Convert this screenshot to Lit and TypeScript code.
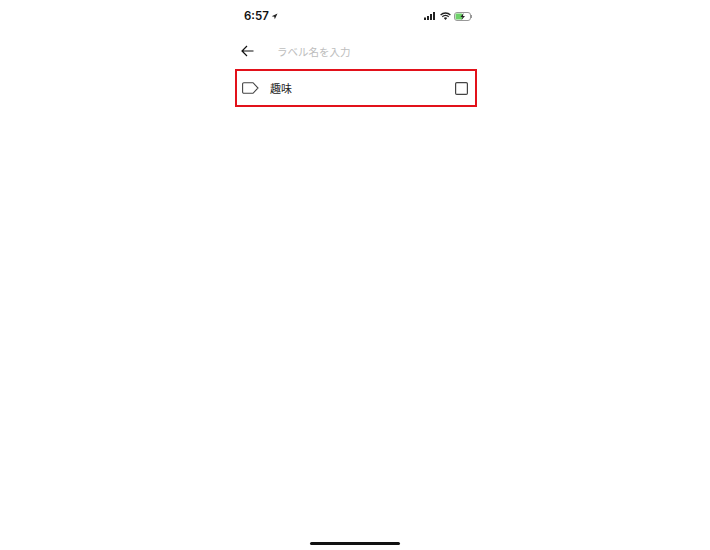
import { LitElement, html, css } from "lit";
import { customElement } from "lit/decorators.js";

@customElement("app-root")
export class AppRoot extends LitElement {
  static styles = css`
    :host { display: block; width: 710px; height: 550px; background: #fff; font-family: "Liberation Sans", "Noto Sans CJK JP", sans-serif; overflow: hidden; }
    .page { width: 242px; height: 550px; margin-left: 235px; display: flex; flex-direction: column; box-sizing: border-box; }
    .status { height: 32px; flex: none; display: flex; align-items: center; justify-content: space-between; padding: 0 4px 1px 9px; }
    .time { display: flex; align-items: center; gap: 2px; font: 600 11.5px "Inter", "Liberation Sans", sans-serif; color: #111; }
    .indicators { display: flex; align-items: center; gap: 3px; }
    .search { height: 36px; flex: none; display: flex; align-items: center; padding-left: 6px; margin-bottom: 0; }
    .placeholder { margin-left: 23px; font-size: 10.5px; color: #bdbdbd; font-family: "Noto Sans CJK JP", sans-serif; }
    .row { height: 38px; flex: none; box-sizing: border-box; border: 2.5px solid #e2111a; display: flex; align-items: center; padding: 0 7px 0 5px; }
    .name { margin-left: 11px; font-size: 11px; color: #222; font-family: "Noto Sans CJK JP", sans-serif; flex: 1; }
    .spacer { flex: 1; }
    .home { flex: none; align-self: center; width: 90px; height: 3px; border-radius: 2px; background: #111; margin-bottom: 5px; margin-left: -2px; }
    svg { display: block; flex: none; }
  `;

  render() {
    return html`
      <div class="page">
        <div class="status">
          <span class="time">6:57
            <svg width="7" height="7" viewBox="0 0 7 7"><path d="M6.5 .5 L.7 3.2 L3.2 3.7 L3.8 6.3 Z" fill="#222"/></svg>
          </span>
          <span class="indicators">
            <svg width="13" height="8" viewBox="0 0 13 8" fill="#222"><rect x="0" y="5.5" width="2" height="2.5"/><rect x="3" y="4" width="2" height="4"/><rect x="6" y="2" width="2" height="6"/><rect x="9" y="0" width="2" height="8"/></svg>
            <svg width="11" height="8" viewBox="0 0 11 8"><path d="M.6 3A7 7 0 0 1 10.4 3M2.3 4.8A4.5 4.5 0 0 1 8.7 4.8" fill="none" stroke="#222" stroke-width="1.3"/><path d="M3.8 6 A2.4 2.4 0 0 1 7.2 6 L5.5 8Z" fill="#222"/></svg>
            <svg width="19" height="9" viewBox="0 0 19 9"><rect x=".5" y=".5" width="16" height="8" rx="2.5" fill="#fff" stroke="#999"/><rect x="1.5" y="1.5" width="7" height="6" rx="1" fill="#6fd16a"/><path d="M9.5 1 L6.5 5 H8.5 L7.5 8 L11 4 H9 Z" fill="#222"/><path d="M17.5 3 V6" stroke="#999" stroke-width="1"/></svg>
          </span>
        </div>
        <div class="search">
          <svg width="13" height="12" viewBox="0 0 13 12"><path d="M12.5 6H1.2M6 1 1 6l5 5" fill="none" stroke="#111" stroke-width="1.2"/></svg>
          <span class="placeholder">ラベル名を入力</span>
        </div>
        <div class="row">
          <svg width="17" height="12" viewBox="0 0 17 12"><path d="M1.8 .7H11L16 6l-5 5.3H1.8A1.2 1.2 0 0 1 .6 10.1V1.9A1.2 1.2 0 0 1 1.8 .7Z" fill="none" stroke="#444" stroke-width="1.1"/></svg>
          <span class="name">趣味</span>
          <svg width="13" height="13" viewBox="0 0 13 13"><rect x=".6" y=".6" width="11.8" height="11.8" rx="1.2" fill="none" stroke="#444" stroke-width="1.2"/></svg>
        </div>
        <div class="spacer"></div>
        <div class="home"></div>
      </div>
    `;
  }
}
